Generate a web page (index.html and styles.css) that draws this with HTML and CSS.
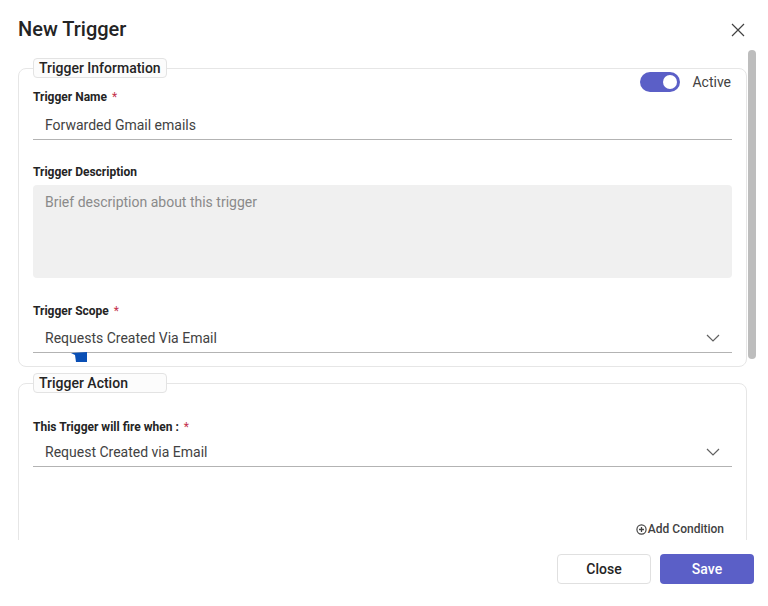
FILE: index.html
```html
<!DOCTYPE html>
<html lang="en">
<head>
    <meta charset="UTF-8">
    <meta name="viewport" content="width=device-width, initial-scale=1.0">
    <title>New Trigger</title>
    <link rel="stylesheet" href="styles.css">
</head>
<body>
    <div class="dialog">
        <header class="dialog-header">
            <h1>New Trigger</h1>
            <button class="close-icon" aria-label="Close">
                <svg width="14" height="14" viewBox="0 0 14 14"><path d="M1 1L13 13M13 1L1 13" stroke="#424242" stroke-width="1.2" fill="none"/></svg>
            </button>
        </header>

        <div class="dialog-body">
            <div class="scroll-content">
                <!-- Trigger Information -->
                <fieldset class="section">
                    <legend>Trigger Information</legend>
                    <div class="toggle-row">
                        <span class="toggle"><span class="knob"></span></span>
                        <span class="toggle-label">Active</span>
                    </div>

                    <label class="field-label first">Trigger Name <span class="req">*</span></label>
                    <div class="text-input">Forwarded Gmail emails</div>

                    <label class="field-label">Trigger Description</label>
                    <div class="text-area">Brief description about this trigger</div>

                    <label class="field-label scope">Trigger Scope <span class="req">*</span></label>
                    <div class="select-input">
                        <span>Requests Created Via Email</span>
                        <svg width="14" height="8" viewBox="0 0 14 8"><path d="M1 1L7 7L13 1" stroke="#616161" stroke-width="1.2" fill="none"/></svg>
                        <svg class="cursor-mark" width="16" height="10" viewBox="0 0 16 10"><path d="M0 1L16 0V10H5L4 3Z" fill="#0a4fb5"/></svg>
                    </div>
                </fieldset>

                <!-- Trigger Action -->
                <fieldset class="section action">
                    <legend>Trigger Action</legend>

                    <label class="field-label fire">This Trigger will fire when : <span class="req">*</span></label>
                    <div class="select-input">
                        <span>Request Created via Email</span>
                        <svg width="14" height="8" viewBox="0 0 14 8"><path d="M1 1L7 7L13 1" stroke="#616161" stroke-width="1.2" fill="none"/></svg>
                    </div>

                    <div class="condition-row">
                        <a class="add-condition">
                            <svg width="11" height="11" viewBox="0 0 12 12"><circle cx="6" cy="6" r="5" stroke="#424242" stroke-width="1.3" fill="none"/><path d="M6 3.3V8.7M3.3 6H8.7" stroke="#424242" stroke-width="1.4"/></svg>Add Condition
                        </a>
                    </div>
                </fieldset>
            </div>
            <div class="scrollbar"><div class="thumb"></div></div>
        </div>

        <footer class="dialog-footer">
            <button class="btn btn-close">Close</button>
            <button class="btn btn-save">Save</button>
        </footer>
    </div>
</body>
</html>
```

FILE: styles.css
```css
body {
    margin: 0;
    padding: 0;
    background: #fff;
    font-family: Roboto, "Noto Sans", sans-serif;
    color: #242424;
}

.dialog {
    width: 768px;
    height: 606px;
    display: flex;
    flex-direction: column;
    background: #fff;
    overflow: hidden;
}

.dialog-header {
    height: 50px;
    display: flex;
    align-items: center;
    justify-content: space-between;
    padding: 0 23px 0 18px;
    box-sizing: border-box;
    flex: none;
}

.dialog-header h1 {
    margin: 0;
    font-size: 20px;
    font-weight: 500;
    line-height: 28px;
    margin-top: 8px;
    color: #242424;
}

.close-icon {
    border: none;
    background: none;
    padding: 0;
    width: 14px;
    height: 14px;
    margin-top: 9px;
    cursor: pointer;
}

.close-icon svg {
    display: block;
}

.dialog-body {
    height: 490px;
    display: flex;
    flex: none;
    overflow: hidden;
}

.scroll-content {
    width: 729px;
    margin-left: 18px;
    padding-top: 8px;
}

.scrollbar {
    width: 8px;
    margin-left: 1px;
}

.scrollbar .thumb {
    height: 309px;
    background: #bdbdbd;
    border-radius: 4px;
}

.section {
    margin: 0;
    border: 1px solid #e6e6e6;
    border-radius: 8px;
    padding: 0 14px 13px 14px;
    min-width: 0;
}

.section legend {
    width: 134px;
    height: 20px;
    box-sizing: border-box;
    border: 1px solid #e3e3e3;
    border-radius: 4px;
    background: #fcfcfc;
    padding: 0 5px;
    font-size: 14px;
    font-weight: 500;
    line-height: 18px;
    white-space: nowrap;
    color: #242424;
}

.section.action {
    margin-top: 6px;
    height: 200px;
}

.toggle-row {
    display: flex;
    justify-content: flex-end;
    align-items: center;
    gap: 12px;
    height: 20px;
    margin-top: -6px;
    padding-right: 1px;
}

.toggle {
    width: 40px;
    height: 20px;
    border-radius: 10px;
    background: #5b5fc7;
    display: flex;
    align-items: center;
    justify-content: flex-end;
    padding: 0 3px;
    box-sizing: border-box;
}

.knob {
    width: 14px;
    height: 14px;
    border-radius: 50%;
    background: #fff;
}

.toggle-label {
    font-size: 14px;
    color: #424242;
}

.field-label {
    display: block;
    font-size: 12px;
    font-weight: 700;
    line-height: 16px;
    margin-top: 24px;
    margin-bottom: 5px;
    color: #242424;
}

.field-label.first {
    margin-top: -3px;
    margin-bottom: 6px;
}

.field-label.scope {
    margin-top: 25px;
}

.field-label.fire {
    margin-top: 26px;
    margin-bottom: 3px;
}

.req {
    color: #c4314b;
    font-weight: 400;
    margin-left: 2px;
}

.text-input,
.select-input {
    height: 29px;
    box-sizing: border-box;
    border-bottom: 1px solid #b3b3b3;
    padding: 0 12px;
    font-size: 14px;
    line-height: 28px;
    color: #424242;
}

.select-input {
    display: flex;
    align-items: center;
    justify-content: space-between;
    position: relative;
}

.text-area {
    height: 93px;
    box-sizing: border-box;
    background: #f0f0f0;
    border-radius: 4px;
    padding: 7px 12px;
    font-size: 14px;
    line-height: 20px;
    color: #8a8a8a;
}

/* stray blue pointer marker under the scope select */
.cursor-mark {
    position: absolute;
    left: 38px;
    top: 28px;
}

.condition-row {
    display: flex;
    justify-content: flex-end;
    margin-top: 55px;
    padding-right: 8px;
}

.add-condition {
    display: flex;
    align-items: center;
    gap: 1px;
    font-size: 12px;
    font-weight: 500;
    color: #424242;
    cursor: pointer;
}

.dialog-footer {
    display: flex;
    justify-content: flex-end;
    gap: 9px;
    padding: 14px 14px 0 0;
}

.btn {
    height: 30px;
    width: 94px;
    border-radius: 4px;
    font-family: Roboto, "Noto Sans", sans-serif;
    font-size: 14px;
    font-weight: 500;
    cursor: pointer;
}

.btn-close {
    background: #fff;
    border: 1px solid #e0e0e0;
    color: #242424;
}

.btn-save {
    background: #5b5fc7;
    border: none;
    color: #fff;
}
```
